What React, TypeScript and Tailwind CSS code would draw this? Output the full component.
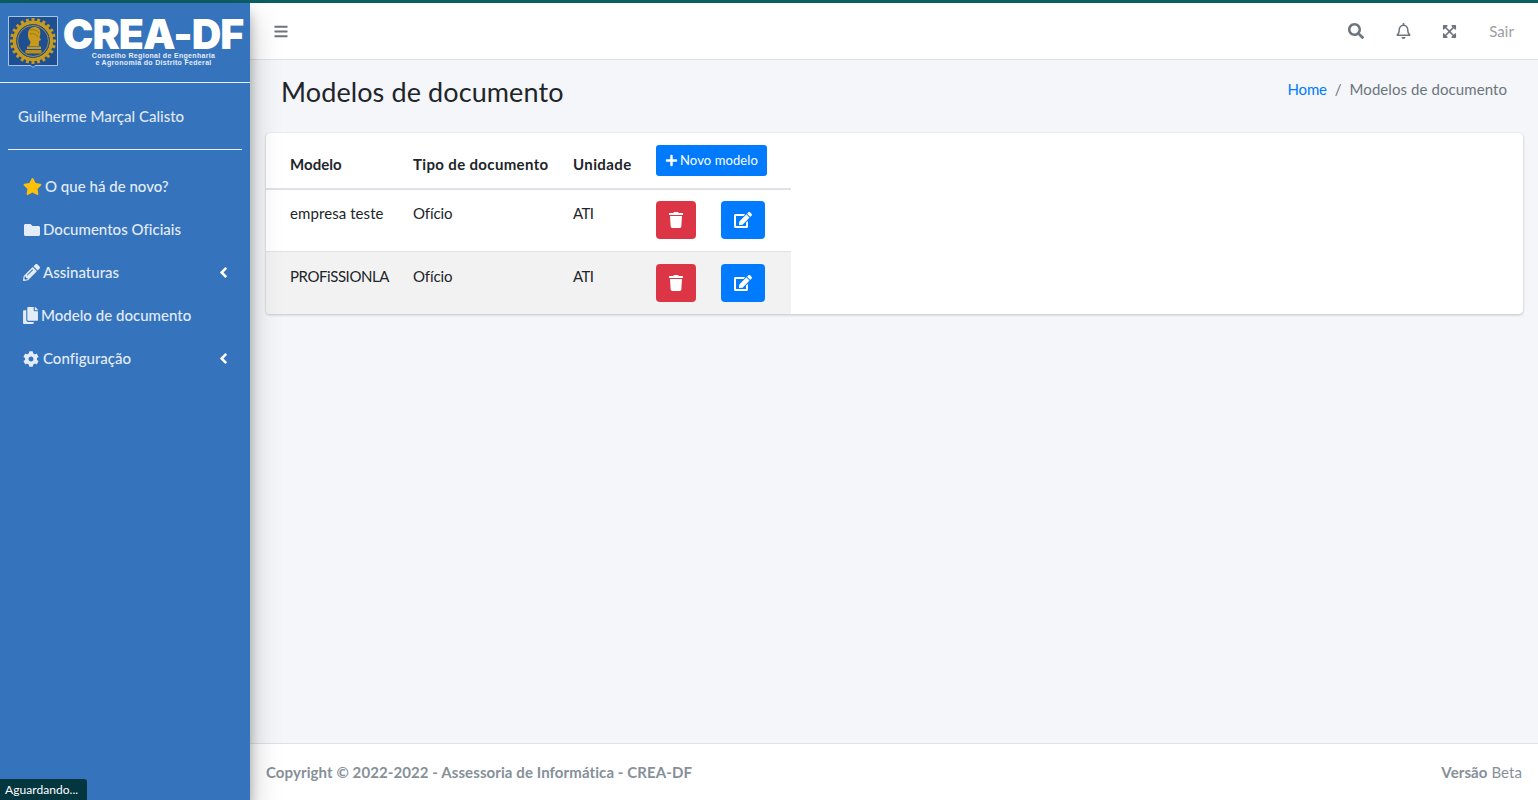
import { FaStar, FaFolder, FaPencilAlt, FaCopy, FaCog, FaAngleLeft, FaBars, FaSearch, FaRegBell, FaExpandArrowsAlt, FaTrash, FaEdit, FaPlus } from 'react-icons/fa';

const font = { fontFamily: '"Lato", "Noto Sans", sans-serif' };

const menu = [
  { label: 'O que há de novo?', icon: <FaStar className="w-[19px] h-[17px] text-[#ffc107]" />, gap: 'ml-[3px]' },
  { label: 'Documentos Oficiais', icon: <FaFolder className="w-[18px] h-[16px]" />, gap: 'ml-[2px]' },
  { label: 'Assinaturas', icon: <FaPencilAlt className="w-[17px] h-[17px]" />, gap: 'ml-[3px]', arrow: true },
  { label: 'Modelo de documento', icon: <FaCopy className="w-[15px] h-[17px]" />, gap: 'ml-[3px]' },
  { label: 'Configuração', icon: <FaCog className="w-[16px] h-[16px]" />, gap: 'ml-[4px]', arrow: true },
];

const rows = [
  { modelo: 'empresa teste', tipo: 'Ofício', unidade: 'ATI', row: 'bg-white h-[62px] border-b border-[#dee2e6]', text: 'pt-[12px]', btn: 'pt-[11px]', track: 'tracking-[0.08px]' },
  { modelo: 'PROFiSSIONLA', tipo: 'Ofício', unidade: 'ATI', row: 'bg-[#f2f2f2] h-[63px]', text: 'pt-[13px]', btn: 'pt-[12px]', track: 'tracking-[-0.42px]' },
];

function Emblem() {
  const teeth = Array.from({ length: 24 }, (_, i) => i * 15);
  return (
    <svg viewBox="0 0 50 52" className="w-[50px] h-[52px] shrink-0">
      <path d="M0.5 0.5H49.5V49.5H27L25 51.5L23 49.5H0.5Z" fill="#1f4f93" stroke="#a9c3e4" />
      <g fill="#c79a1e">
        {teeth.map((a) => (
          <rect key={a} x="23.5" y="2" width="3" height="4" transform={`rotate(${a} 25 25)`} />
        ))}
      </g>
      <circle cx="25" cy="25" r="18.5" fill="none" stroke="#c79a1e" strokeWidth="3.5" />
      <circle cx="25" cy="25" r="16.7" fill="#1f4f93" />
      <circle cx="25" cy="25" r="15.5" fill="none" stroke="#c79a1e" strokeWidth="0.8" />
      <path d="M21 30C22 28 22.5 27 22.5 25.5C20 23 19 18 21 14C23 10.5 28 10 31 12.5C33 15 32.5 19 31.5 21L33 24L31 25C31 27 30.5 28.5 31 30Z" fill="#c79a1e" />
      <path d="M22 14C25 13 29 14 31 17M22 18C25 17 28 18 30 21" fill="none" stroke="#8a6a14" strokeWidth="0.7" />
      <rect x="19" y="30.5" width="14" height="2.5" fill="#c79a1e" />
      <rect x="17.5" y="34" width="16" height="3.5" fill="#b98f1c" />
    </svg>
  );
}

export default function App() {
  return (
    <div style={font} className="relative w-full h-[800px] overflow-hidden flex flex-col bg-[#f4f6f9] text-[#212529] text-base">
      <div className="h-[3px] bg-[#0b5f63] shrink-0" />
      <div className="flex flex-1 min-h-0">
        {/* Sidebar */}
        <aside className="w-[250px] shrink-0 bg-[#3673bd] z-10 shadow-[0_14px_28px_rgba(0,0,0,0.25),0_10px_10px_rgba(0,0,0,0.22)] flex flex-col">
          <div className="h-[80px] border-b border-[#e8eef7] pl-[8px] pt-[13px] flex gap-[5px]">
            <Emblem />
            <div className="flex flex-col items-center w-[180px]">
              <span className="text-white font-black text-[41px] leading-[36px] tracking-[-1px] whitespace-nowrap" style={{ fontFamily: '"Inter", sans-serif' }}>
                CREA-DF
              </span>
              <span className="text-[#e3ecf7] font-bold text-[7px] leading-[7px] ml-[1px] text-center tracking-[0.32px] whitespace-nowrap" style={{ fontFamily: '"Liberation Sans", sans-serif' }}>
                Conselho Regional de Engenharia<br />e Agronomia do Distrito Federal
              </span>
            </div>
          </div>
          <div className="mx-[8px] h-[67px] border-b border-[#e8eef7] pl-[10px] pt-[23px] text-[#dfe8f4] text-[15px] leading-[20px] font-medium">
            Guilherme Marçal Calisto
          </div>
          <nav className="mt-[15px] pl-[23px] pr-[22px] flex flex-col text-[#e3ecf7]">
            {menu.map((m) => (
              <div key={m.label} className="h-[43px] flex items-center">
                {m.icon}
                <span className={`${m.gap} flex-1 text-[15px] font-medium tracking-[0.02px]`}>{m.label}</span>
                {m.arrow && <FaAngleLeft className="w-[9px] h-[17px] text-white" />}
              </div>
            ))}
          </nav>
        </aside>

        {/* Main */}
        <div className="flex-1 min-w-0 flex flex-col">
          <header className="h-[57px] shrink-0 bg-white border-b border-[#dee2e6] flex items-center pl-[24px] pr-[24px] text-[#6c757d]">
            <FaBars className="w-[14px] h-[15px] mt-[1px]" />
            <div className="ml-auto flex items-center">
              <FaSearch className="w-[16px] h-[16px] mr-[32px]" />
              <FaRegBell className="w-[15px] h-[16px] mr-[31px]" />
              <FaExpandArrowsAlt className="w-[15px] h-[15px] mr-[32px]" />
              <span className="text-[15px] text-[#9a9ea3] tracking-[0.05px]">Sair</span>
            </div>
          </header>

          <main className="flex-1 min-h-0 pl-[16px] pr-[15px]">
            <div className="flex items-start justify-between pl-[15px] pr-[16px] pt-[14px] h-[73px]">
              <h1 className="text-[27px] leading-[36px] font-normal text-[#212529] tracking-[0.1px]">Modelos de documento</h1>
              <div className="text-[15px] pt-[3px] leading-[24px] flex items-center">
                <span className="text-[#007bff] tracking-[-0.2px]">Home</span>
                <span className="text-[#6c757d] mx-[8px]">/</span>
                <span className="text-[#6c757d] tracking-[0.08px]">Modelos de documento</span>
              </div>
            </div>

            <div className="bg-white rounded-[4px] shadow-[0_0_1px_rgba(0,0,0,0.125),0_1px_3px_rgba(0,0,0,0.2)] overflow-hidden">
              <table className="table-fixed w-[525px] text-[15px] border-collapse">
                <colgroup>
                  <col className="w-[147px]" />
                  <col className="w-[160px]" />
                  <col className="w-[83px]" />
                  <col className="w-[135px]" />
                </colgroup>
                <thead>
                  <tr className="h-[56px] border-b-2 border-[#dee2e6] text-left">
                    <th className="pl-[24px] pt-[8px] font-bold tracking-[0.05px]">Modelo</th>
                    <th className="font-bold pt-[8px] tracking-[0.35px]">Tipo de documento</th>
                    <th className="font-bold pt-[8px] tracking-[0.4px]">Unidade</th>
                    <th className="align-top pt-[12px]">
                      <button className="w-[111px] h-[31px] rounded-[3px] bg-[#007bff] text-white text-[13px] font-normal tracking-[0.1px] flex items-center justify-center gap-[2px]">
                        <FaPlus className="w-[13px] h-[13px]" />
                        Novo modelo
                      </button>
                    </th>
                  </tr>
                </thead>
                <tbody>
                  {rows.map((r) => (
                    <tr key={r.modelo} className={r.row}>
                      <td className={`pl-[24px] align-top ${r.text} ${r.track}`}>{r.modelo}</td>
                      <td className={`align-top ${r.text} tracking-[-0.1px]`}>{r.tipo}</td>
                      <td className={`align-top ${r.text} tracking-[-0.6px]`}>{r.unidade}</td>
                      <td className={`align-top ${r.btn}`}>
                        <div className="flex gap-[25px]">
                          <button className="w-[40px] h-[38px] rounded-[4px] bg-[#dc3545] text-white flex items-center justify-center">
                            <FaTrash className="w-[14px] h-[16px]" />
                          </button>
                          <button className="w-[44px] h-[38px] rounded-[4px] bg-[#007bff] text-white flex items-center justify-center">
                            <FaEdit className="w-[18px] h-[16px]" />
                          </button>
                        </div>
                      </td>
                    </tr>
                  ))}
                </tbody>
              </table>
            </div>
          </main>

          <footer className="h-[57px] shrink-0 bg-white border-t border-[#dee2e6] flex items-center justify-between px-[16px] text-[15px] text-[#869099]">
            <span className="font-bold tracking-[0.09px]">Copyright © 2022-2022 - Assessoria de Informática - CREA-DF</span>
            <span className="tracking-[0.08px]"><b>Versão</b> Beta</span>
          </footer>
        </div>
      </div>

      <div className="absolute left-0 bottom-0 z-20 w-[87px] h-[21px] bg-[#03363f] rounded-tr-[3px] text-white text-[12px] leading-[21px] pl-[5px] tracking-[0.05px]">
        Aguardando...
      </div>
    </div>
  );
}
